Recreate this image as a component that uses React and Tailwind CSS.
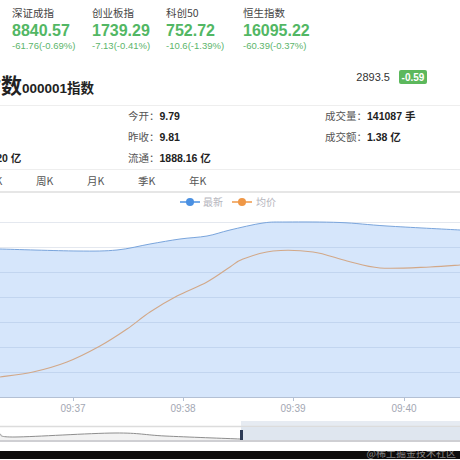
import React from 'react';

const indices = [
  { name: '深证成指', value: '8840.57', change: '-61.76(-0.69%)', w: 'w-[80px]' },
  { name: '创业板指', value: '1739.29', change: '-7.13(-0.41%)', w: 'w-[74px]' },
  { name: '科创50', value: '752.72', change: '-10.6(-1.39%)', w: 'w-[77px]' },
  { name: '恒生指数', value: '16095.22', change: '-60.39(-0.37%)', w: 'w-[90px]' },
];

const infoRows = [
  [['最高', '9.85'], ['今开', '9.79'], ['成交量', '141087 手']],
  [['最低', '9.76'], ['昨收', '9.81'], ['成交额', '1.38 亿']],
  [['总市值', '2416.20 亿'], ['流通', '1888.16 亿'], null],
];

const tabs = ['日K', '周K', '月K', '季K', '年K'];

// chart points, y relative to top of chart block
const latest = [[0, 57], [77, 59], [117, 58], [150, 52], [180, 47], [207, 44], [230, 38], [263, 31], [287, 30], [340, 30.5], [387, 34], [460, 38]];
const avg = [[0, 185], [33, 180], [67, 170], [100, 154], [127, 137], [150, 120], [177, 104], [207, 90], [230, 75], [243, 67], [273, 59], [313, 60], [347, 69], [380, 76], [430, 75], [460, 73]];
const mini = [[0, 242], [15, 245], [115, 241], [165, 244], [240, 247]];

function smooth(pts) {
  let d = `M${pts[0][0]},${pts[0][1]}`;
  for (let i = 0; i < pts.length - 1; i++) {
    const p0 = pts[i - 1] || pts[i];
    const p1 = pts[i];
    const p2 = pts[i + 1];
    const p3 = pts[i + 2] || p2;
    const c1x = p1[0] + (p2[0] - p0[0]) / 6;
    const c1y = p1[1] + (p2[1] - p0[1]) / 6;
    const c2x = p2[0] - (p3[0] - p1[0]) / 6;
    const c2y = p2[1] - (p3[1] - p1[1]) / 6;
    d += ` C${c1x},${c1y} ${c2x},${c2y} ${p2[0]},${p2[1]}`;
  }
  return d;
}

function Chart() {
  const line = smooth(latest);
  const grid = [30, 55, 80, 105, 130, 155, 180];
  const ticks = [[73, '09:37'], [183, '09:38'], [293, '09:39'], [404, '09:40']];
  const miniLine = smooth(mini);
  return (
    <svg width="460" height="258" viewBox="0 1 460 258" className="block">
      {/* legend */}
      <line x1="180" y1="10" x2="200" y2="10" stroke="#4a90e2" strokeWidth="1.5" />
      <circle cx="190" cy="10" r="4" fill="#4a90e2" />
      <text x="203" y="13.5" fontSize="10" fill="#b5b5bd" fontFamily="'Noto Sans CJK SC', sans-serif">最新</text>
      <line x1="232" y1="10" x2="252" y2="10" stroke="#ef9746" strokeWidth="1.5" />
      <circle cx="242" cy="10" r="4" fill="#ef9746" />
      <text x="256" y="13.5" fontSize="10" fill="#b5b5bd" fontFamily="'Noto Sans CJK SC', sans-serif">均价</text>

      {grid.map((y) => (
        <line key={y} x1="0" y1={y + 0.5} x2="460" y2={y + 0.5} stroke="#e4e8ef" strokeWidth="1" />
      ))}
      <path d={`${line} L460,205 L0,205 Z`} fill="#5b9cf0" fillOpacity="0.25" />
      <path d={line} fill="none" stroke="#7aa5dc" strokeWidth="1" />
      <path d={smooth(avg)} fill="none" stroke="#d2a888" strokeWidth="1.1" />

      <line x1="0" y1="205.5" x2="460" y2="205.5" stroke="#b3c0d4" strokeWidth="1" />
      {ticks.map(([x, t]) => (
        <g key={t}>
          <line x1={x + 0.5} y1="205" x2={x + 0.5} y2="209" stroke="#b3c0d4" strokeWidth="1" />
          <text x={x} y="219.5" fontSize="10" fill="#a3a7b3" textAnchor="middle" fontFamily="'Liberation Sans', sans-serif">{t}</text>
        </g>
      ))}

      {/* data zoom */}
      <rect x="241" y="229" width="219" height="5" fill="#e6ebf2" />
      <rect x="0" y="234" width="460" height="16" fill="#ffffff" />
      <line x1="0" y1="234.5" x2="460" y2="234.5" stroke="#dcdcdc" strokeWidth="1.5" />
      <path d={`${miniLine} L240,249 L0,249 Z`} fill="#f2f2f2" />
      <path d={miniLine} fill="none" stroke="#8e8e8e" strokeWidth="1" />
      <rect x="0" y="248" width="460" height="2" fill="#cfcfd3" />
      <rect x="241" y="235" width="219" height="13" fill="#dfe6ef" />
      <rect x="240" y="238" width="3" height="10" fill="#2c3a55" />
    </svg>
  );
}

export default function App() {
  return (
    <div className="relative w-[460px] h-[460px] overflow-hidden bg-white text-[#333]" style={{ fontFamily: "'Liberation Sans', 'Noto Sans CJK SC', sans-serif" }}>
      {/* Index strip */}
      <div className="flex h-[52px] pl-3 pt-[6px]">
        {indices.map((it) => (
          <div key={it.name} className={`${it.w} shrink-0 flex flex-col`}>
            <span className="text-[10.5px] leading-[14px] text-[#444]" style={{ fontFamily: "'Noto Sans CJK SC', sans-serif" }}>{it.name}</span>
            <span className="text-[16px] leading-[20px] font-bold text-[#52b764] mt-[1px]">{it.value}</span>
            <span className="text-[9.5px] leading-[12px] text-[#5cb56c] mt-[-1px]">{it.change}</span>
          </div>
        ))}
      </div>

      {/* Title row */}
      <div className="flex h-[54px] justify-between border-b border-[#eeeeee]">
        <div className="flex items-baseline -ml-[62px] pt-[19px] shrink-0">
          <span className="text-[21px] leading-[26px] font-bold text-[#222]" style={{ fontFamily: "'Noto Sans CJK SC', sans-serif" }}>上证指数</span>
          <span className="text-[13.5px] font-bold text-[#222]">000001</span>
          <span className="text-[13.5px] font-bold text-[#222]" style={{ fontFamily: "'Noto Sans CJK SC', sans-serif" }}>指数</span>
        </div>
        <div className="flex items-center gap-[9px] pr-[33px] pt-[17px] self-start">
          <span className="text-[11px] text-[#333]">2893.5</span>
          <span className="h-[14px] w-[28px] flex items-center justify-center rounded-[2px] bg-[#5cb85c] text-white text-[10px] font-bold">-0.59</span>
        </div>
      </div>

      {/* Info grid */}
      <div className="-ml-[72px] border-b border-[#eeeeee] h-[64px]">
        {infoRows.map((row, i) => (
          <div key={i} className="flex h-[21px] items-center text-[10.5px]">
            {row.map((cell, j) => (
              <div key={j} className={`shrink-0 whitespace-nowrap ${j === 0 ? 'w-[200px]' : j === 1 ? 'w-[197px]' : 'w-[150px]'}`}>
                {cell && (
                  <>
                    <span className="text-[#555]" style={{ fontFamily: "'Noto Sans CJK SC', sans-serif" }}>{cell[0]}：</span>
                    <span className="font-bold text-[#222]">{cell[1]}</span>
                  </>
                )}
              </div>
            ))}
          </div>
        ))}
      </div>

      {/* Tabs */}
      <div className="flex h-[23px] items-center -ml-[15px] border-b-2 border-[#e6e6e6]">
        {tabs.map((t) => (
          <span key={t} className="w-[51px] shrink-0 text-[10.5px] text-[#555]" style={{ fontFamily: "'Noto Sans CJK SC', sans-serif" }}>{t}</span>
        ))}
      </div>

      <Chart />

      <div className="h-[8px] bg-[#0d0b0b]" />
      <span className="absolute right-[4px] bottom-[1px] text-[10px] leading-[12px] text-white/50" style={{ fontFamily: "'Noto Sans CJK SC', sans-serif" }}>@稀土掘金技术社区</span>
    </div>
  );
}
